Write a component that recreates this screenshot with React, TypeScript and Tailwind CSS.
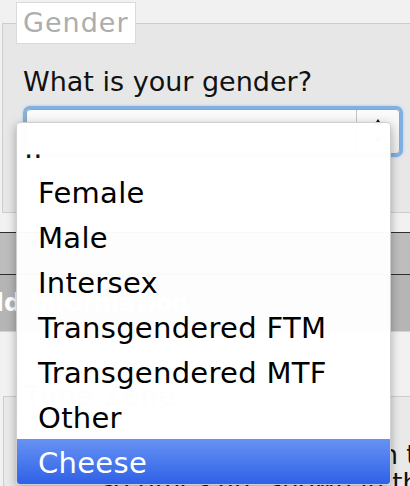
import React from 'react'

const options = ['Female', 'Male', 'Intersex', 'Transgendered FTM', 'Transgendered MTF', 'Other', 'Cheese']

function SelectArrows() {
  return (
    <svg width="12" height="30" viewBox="0 0 12 30" aria-hidden="true">
      <path d="M6 2 L10 8 L2 8 Z" fill="#111" />
      <path d="M6 26 L10 20 L2 20 Z" fill="#9a9a9a" />
    </svg>
  )
}

export default function App() {
  return (
    <div
      className="relative h-[486px] w-[410px] overflow-hidden bg-[#f1f1f1] text-[#111]"
      style={{ fontFamily: '"DejaVu Sans", Verdana, sans-serif' }}
    >
      {/* Gender fieldset */}
      <fieldset className="mt-[2px] ml-[2px] w-[430px] border border-[#cdcdcd] bg-[#e7e7e7] pb-[58px]">
        <legend className="ml-[13px] h-[42px] border border-[#dadada] bg-white px-[6px] text-[27px] leading-[40px] tracking-[1px] text-[#adadad]">
          Gender
        </legend>
        <div className="pl-[20px]">
          <label className="mt-[22px] block text-[27px] leading-[32px]">What is your gender?</label>
          <div className="mt-[11px] ml-[3px] flex h-[45px] w-[374px] rounded-[4px] border border-[#8fa6bf] bg-linear-to-b from-[#fbfbfb] to-[#ececec] shadow-[0_0_0_3px_#7fb0e2,0_0_3px_3px_rgba(127,176,226,0.6)]">
            <div className="flex-1" />
            <div className="flex w-[43px] items-center justify-center border-l border-[#c4c4c4]">
              <SelectArrows />
            </div>
          </div>
        </div>
      </fieldset>

      {/* section bars */}
      <div className="mt-[19px] h-[43px] w-[410px] border-y border-[#2f2f2f] bg-[#bdbdbd]" />
      <div className="flex h-[57px] items-center border-b border-[#d2d2d2] bg-[#b5b5b5]">
        <span className="-ml-[122px] text-[24px] font-bold whitespace-nowrap text-white">Household Information</span>
      </div>

      {/* Time zone fieldset */}
      <fieldset className="mt-[43px] ml-[3px] w-[430px] border border-[#cdcdcd] bg-[#e9e9e9] pb-[20px]">
        <legend className="ml-[13px] h-[42px] border border-[#dadada] bg-white px-[6px] text-[27px] leading-[40px] tracking-[1px] text-[#adadad]">
          Time Zone
        </legend>
        <div className="mt-[24px] text-[26px] leading-[28px] whitespace-nowrap">
          <div className="w-[445px] text-right">Pick the zone you live in the</div>
          <div className="w-[431px] text-right">so times are shown in the</div>
        </div>
      </fieldset>

      {/* open select popup */}
      <div className="absolute top-[122px] left-[16px] w-[375px] overflow-hidden rounded-[4px] border border-[#cfcfcf] bg-white/[0.97] pt-px shadow-[0_3px_10px_rgba(0,0,0,0.3)]">
        <div className="h-[45px] pt-[4px] pl-[7px] text-[29px] leading-[41px]">..</div>
        {options.map((option) => (
          <div
            key={option}
            className={`h-[45px] pt-[4px] pl-[21px] text-[29px] leading-[41px] tracking-[0.3px] whitespace-nowrap ${
              option === 'Cheese' ? 'bg-linear-to-b from-[#6792f4] to-[#2f60e6] text-white' : 'text-black'
            }`}
          >
            {option}
          </div>
        ))}
      </div>
    </div>
  )
}
